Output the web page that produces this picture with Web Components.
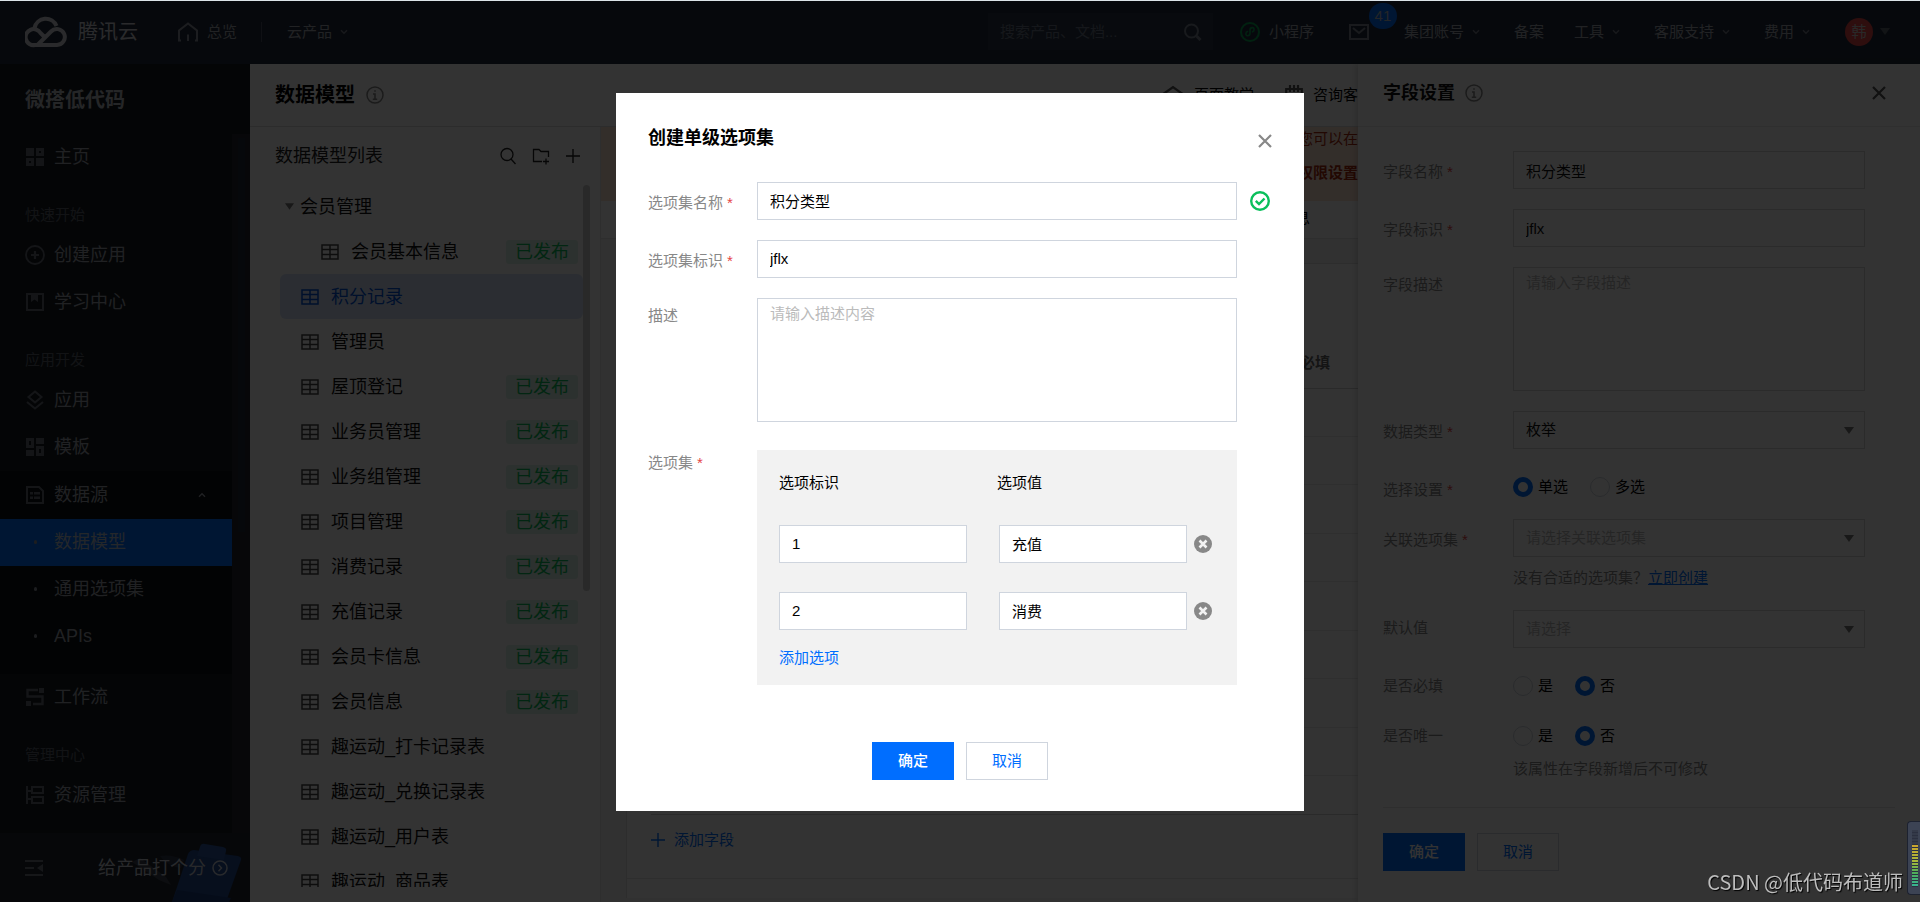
<!DOCTYPE html>
<html lang="zh-CN">
<head>
<meta charset="utf-8">
<title>微搭低代码 - 数据模型</title>
<style>
html,body{margin:0;height:100%}
body{font:15px/20px "Liberation Sans","Noto Sans CJK SC",sans-serif;color:#000;background:#fff;overflow:hidden}
</style>
</head>
<body>
<wd-app></wd-app>
<script>
function define(name, html, setup) {
  const tpl = document.createElement('template');
  tpl.innerHTML = '<style>*{box-sizing:border-box}:host{display:block}button,input,select,textarea{font:inherit;color:inherit;margin:0;border-radius:0}button{background:none;border:0;padding:0}a{text-decoration:none;color:inherit}</style>' + html;
  customElements.define(name, class extends HTMLElement {
    connectedCallback() {
      if (this.shadowRoot) return;
      this.attachShadow({ mode: 'open' }).append(tpl.content.cloneNode(true));
      if (setup) setup.call(this, this.shadowRoot);
    }
  });
}

const ICONS = {
  cloud: ['0 0 42 32', '<g fill="none" stroke="currentColor" stroke-width="4"><path d="M9.500 12a11.500 11.500 0 0 1 22-2"/><path d="M19 20.500l-3.500-3.500A8 8 0 1 0 10 29h22a8 8 0 1 0-6-13.500L13 28.500"/></g>'],
  home: ['0 0 20 20', '<path fill="none" stroke="currentColor" stroke-width="2" d="M3 18.500H1V8.500L10 1.500l9 7v10h-2M10 12.500v6.500"/>'],
  chev: ['0 0 8 6', '<path fill="none" stroke="currentColor" stroke-width="1.400" d="M1 1.200l3 3 3-3"/>'],
  chevup: ['0 0 8 6', '<path fill="none" stroke="currentColor" stroke-width="1.400" d="M1 4.800l3-3 3 3"/>'],
  caret: ['0 0 10 7', '<path fill="currentColor" d="M0 0h10L5 7z"/>'],
  search: ['0 0 16 18', '<g fill="none" stroke="currentColor" stroke-width="1.300"><circle cx="7" cy="7.500" r="6"/><path d="M11 12l4.500 5"/></g>'],
  searchb: ['0 0 18 18', '<g fill="none" stroke="currentColor" stroke-width="2"><circle cx="7.500" cy="8" r="6.500"/><path stroke-width="3" d="M12.500 13l4 4"/></g>'],
  mini: ['0 0 20 20', '<g fill="none" stroke="currentColor"><circle cx="10" cy="10" r="9" stroke-width="2"/><path stroke-width="1.600" stroke-linecap="round" d="M7.500 9.500c-2 .5-2.300 4.200 0 4.200 1.500 0 2.500-1 2.500-2.500V8c0-1.500 1-2.400 2.400-2.400 2.200 0 2.200 3.400.1 4.200"/></g>'],
  mail: ['0 0 20 16', '<path fill="none" stroke="currentColor" stroke-width="2" d="M1 1h18v14H1zM4 4l6 5 6-5"/>'],
  info: ['0 0 18 18', '<circle cx="9" cy="9" r="8" fill="none" stroke="currentColor" stroke-width="1.500"/><path fill="none" stroke="currentColor" stroke-width="1.600" d="M7 8h2v5M6.800 13.200h4.400M8.200 5h1.600"/>'],
  folder: ['0 0 18 18', '<path fill="none" stroke="currentColor" stroke-width="1.300" d="M10 14.500H1.500v-12H7l2 2h7.500V10M11 14.500h6M14 11.500v6"/>'],
  plus: ['0 0 14 14', '<path fill="none" stroke="currentColor" stroke-width="1.400" d="M7 0v14M0 7h14"/>'],
  table: ['0 0 18 18', '<path fill="none" stroke="currentColor" stroke-width="1.500" d="M1 2h16v14H1zM1 6.500h16M1 11.500h16M9 2v14"/>'],
  close: ['0 0 14 14', '<path fill="none" stroke="currentColor" stroke-width="2.200" d="M1 1l12 12M13 1L1 13"/>'],
  check: ['0 0 20 20', '<g fill="none" stroke="currentColor"><circle cx="10" cy="10" r="8.800" stroke-width="2.400"/><path stroke-width="2.400" d="M5.800 9.800l3.200 3.200 5.500-5.500"/></g>'],
  remove: ['0 0 18 18', '<circle cx="9" cy="9" r="9" fill="currentColor"/><path stroke="#f2f2f2" stroke-width="2.600" d="M5.500 5.500l7 7M12.500 5.500l-7 7"/>'],
  school: ['0 0 22 20', '<path fill="none" stroke="currentColor" stroke-width="2.200" d="M2 8.500L11 2l9 6.500L11 15zM5 11v6h12v-6"/>'],
  calendar: ['0 0 18 20', '<path fill="none" stroke="currentColor" stroke-width="2.200" d="M1.200 4h15.600v14H1.200zM5 0v7M9 0v7M13 0v7"/>'],
  grid: ['0 0 18 18', '<path fill="currentColor" fill-rule="evenodd" d="M0 0h8v8H0zM10 0h8v8h-8zM13 3v2h2V3zM0 10h8v8H0zM3 13v2h2v-2zM10 10h8v8h-8z"/>'],
  add: ['0 0 20 20', '<circle cx="10" cy="10" r="9" fill="none" stroke="currentColor" stroke-width="1.800"/><path stroke="currentColor" stroke-width="2.200" d="M10 6v8M6 10h8"/>'],
  book: ['0 0 18 18', '<path fill="none" stroke="currentColor" stroke-width="2" d="M1 1h16v16H1z"/><path fill="currentColor" d="M5 1h7v8L8.500 6.500 5 9z"/>'],
  layers: ['0 0 18 20', '<path fill="none" stroke="currentColor" stroke-width="2" d="M9 1.500L15.500 7 9 12.500 2.500 7zM1 12l8 6.500 8-6.500"/>'],
  tpl: ['0 0 18 18', '<path fill="currentColor" fill-rule="evenodd" d="M0 0h8v10H0zM3 3v4h2V3zM10 0h8v6h-8zM0 12h8v6H0zM10 8h8v10h-8zM13 11v4h2v-4z"/>'],
  data: ['0 0 18 18', '<path fill="none" stroke="currentColor" stroke-width="2" d="M1 1h12l4 4v12H1z"/><path fill="currentColor" d="M4 6h3v2.500H4zM8 6h6v2.500H8zM4 10.500h3V13H4zM8 10.500h6V13H8z"/>'],
  flow: ['0 0 18 18', '<path fill="none" stroke="currentColor" stroke-width="2.400" d="M12 2H1.500v6.500h15V16H7"/><path fill="currentColor" d="M13 0h5v5h-5zM0 13h5v5H0z"/>'],
  res: ['0 0 18 18', '<path fill="none" stroke="currentColor" stroke-width="2" d="M1 0v18M1 5h5M1 13h5M6 1h11v6H6zM6 11h11v6H6z"/>'],
  line: ['0 0 20 18', '<path stroke="currentColor" stroke-width="1.600" d="M0 1h20"/>'],
  fold: ['0 0 18 16', '<path fill="none" stroke="currentColor" stroke-width="2" d="M0 1h18M0 8h9M0 15h18"/><path fill="currentColor" d="M18 4v8l-6-4z"/>'],
  go: ['0 0 16 16', '<g fill="none" stroke="currentColor" stroke-width="1.500"><circle cx="8" cy="8" r="7"/><path d="M6.500 4.800L9.500 8l-3 3.200"/></g>'],
  clipboard: ['0 0 112 60', '<path fill="#5b6170" opacity=".5" d="M0 20l8-4 26 19 5 8-12-5z"/><path fill="#4b5a78" opacity=".4" d="M28 14q12-2 24 4l-3 8q-14-2-21-12z"/><path fill="#234a91" d="M62 8l44 6q4 1 3 4L94 60H40L56 12q2-4 6-4z"/><path fill="#1b3c7c" d="M45 48l54 8-2 4H40z"/><path fill="#2d579f" d="M68 5q1-4 5-3l18 3q4 1 3 4l-2 9-27-4z"/>']
};
customElements.define('wd-icon', class extends HTMLElement {
  connectedCallback() {
    if (this.shadowRoot) return;
    const [box, body] = ICONS[this.getAttribute('name')];
    const [, , w, h] = box.split(' ');
    this.attachShadow({ mode: 'open' }).innerHTML =
      `<style>:host{display:inline-block;flex:none;width:${w}px;height:${h}px}svg{display:block;width:100%;height:100%}</style><svg viewBox="${box}" aria-hidden="true">${body}</svg>`;
  }
});

/* ---------- top bar ---------- */
define('wd-header', `
<style>
:host{background:#222b3c;color:#a4aab4;height:63px;flex:none}
header{display:flex;align-items:center;height:100%;padding:0 30px 2px 25px}
.brand{display:flex;align-items:center;gap:11px;font-size:20px;color:#d0d3d9}
.home{display:flex;align-items:center;gap:9px;margin-left:40px}
.home wd-icon{color:#8d939f}
.sep{width:1px;height:20px;background:#4a5365;margin:0 25px 0 24px}
.drop{display:flex;align-items:center;gap:8px}
.drop wd-icon{color:#757c89;margin-right:4px}
.right{display:flex;align-items:center;margin-left:auto}
.search{display:flex;align-items:center;width:225px;height:37px;padding:0 11px 0 12px;background:#293445;color:#7a8290;margin-right:27px}
.search input{flex:1;min-width:0;background:none;border:0;padding:0;outline:0}
.search input::placeholder{color:#6b7585;opacity:1}
.mini{display:flex;align-items:center;gap:9px;margin-right:35px}
.mini wd-icon{color:#07a553}
.mail{position:relative;display:flex;margin-right:35px;color:#7c8390}
.badge{position:absolute;left:20px;bottom:11px;width:28px;height:26px;border-radius:13px;background:#006eff;color:#b4bac4;text-align:center;line-height:26px}
nav{display:flex;gap:30px;margin-right:31px}
.user{display:flex;align-items:center;gap:7px;color:#5c6370}
.avatar{width:28px;height:28px;border-radius:14px;background:#e54545;color:#ccc;text-align:center;line-height:28px}
</style>
<header>
<a class="brand" href="#"><wd-icon name="cloud"></wd-icon>腾讯云</a>
<a class="home" href="#"><wd-icon name="home"></wd-icon>总览</a><span class="sep"></span>
<a class="drop" href="#">云产品<wd-icon name="chev"></wd-icon></a>
<div class="right">
<label class="search"><input aria-label="搜索" placeholder="搜索产品、文档..."><wd-icon name="searchb"></wd-icon></label>
<a class="mini" href="#"><wd-icon name="mini"></wd-icon>小程序</a>
<a class="mail" href="#" aria-label="消息"><wd-icon name="mail"></wd-icon><span class="badge">41</span></a>
<nav>
<a class="drop" href="#">集团账号<wd-icon name="chev"></wd-icon></a>
<a class="drop" href="#">备案</a>
<a class="drop" href="#">工具<wd-icon name="chev"></wd-icon></a>
<a class="drop" href="#">客服支持<wd-icon name="chev"></wd-icon></a>
<a class="drop" href="#">费用<wd-icon name="chev"></wd-icon></a>
</nav>
<a class="user" href="#"><span class="avatar">韩</span><wd-icon name="caret"></wd-icon></a>
</div>
</header>`);

/* ---------- sidebar ---------- */
define('wd-nav-item', `
<style>
:host{flex:none}
a{display:flex;align-items:center;height:47px;padding:0 0 2px 25px;font-size:18px;color:#a0a5ae}
.ic{display:flex;justify-content:center;width:20px;margin-right:9px;color:#656b76}
:host([sub]) i{width:3px;height:4px;border-radius:2px;background:#8a909b}
:host([active]) a{background:#006eff;color:#b4c0d2}
wd-icon.end{margin-left:auto;margin-right:26px}
</style>
<a href="#"><span class="ic"></span><slot></slot></a>`, function (root) {
  const icon = this.getAttribute('icon');
  root.querySelector('.ic').innerHTML = icon ? `<wd-icon name="${icon}"></wd-icon>` : '<i></i>';
  if (this.hasAttribute('open')) root.querySelector('a').insertAdjacentHTML('beforeend', '<wd-icon class="end" name="chevup"></wd-icon>');
});
define('wd-sidebar', `
<style>
:host{display:flex;flex-direction:column;width:250px;flex:none;background:#161b22;min-height:0}
h1{margin:0;padding:2px 0 0 25px;font-size:20px;line-height:68px;color:#b9bdc4;flex:none}
.scroll{flex:1;display:flex;min-height:0;overflow:hidden}
nav{flex:1;display:flex;flex-direction:column}
h2{margin:0;padding:23px 0 6px 25px;font-size:15px;line-height:22px;font-weight:400;color:#5c626c;flex:none}
.group{background:#0b0f14;padding:1px 0 14px;flex:none}
.track{width:18px;background:#25272d;padding:4px 5px 0 6px}
.track div{height:394px;background:#212a3a}
footer{display:flex;align-items:center;height:69px;flex:none;background:#20252f;padding-left:25px;color:#6d737e;position:relative;overflow:hidden}
footer a{display:flex;align-items:center;gap:6px;margin-left:auto;margin-right:22px;font-size:18px;color:#c9ced8;position:relative}
.art{position:absolute;right:6px;bottom:0}
</style>
<h1>微搭低代码</h1>
<div class="scroll"><nav>
<wd-nav-item icon="grid">主页</wd-nav-item>
<h2>快速开始</h2>
<wd-nav-item icon="add">创建应用</wd-nav-item>
<wd-nav-item icon="book">学习中心</wd-nav-item>
<h2>应用开发</h2>
<wd-nav-item icon="layers">应用</wd-nav-item>
<wd-nav-item icon="tpl">模板</wd-nav-item>
<div class="group">
<wd-nav-item icon="data" open>数据源</wd-nav-item>
<wd-nav-item sub active>数据模型</wd-nav-item>
<wd-nav-item sub>通用选项集</wd-nav-item>
<wd-nav-item sub>APIs</wd-nav-item>
</div>
<wd-nav-item icon="flow">工作流</wd-nav-item>
<h2>管理中心</h2>
<wd-nav-item icon="res">资源管理</wd-nav-item>
<wd-nav-item icon="line"></wd-nav-item>
</nav><div class="track"><div></div></div></div>
<footer><wd-icon name="fold"></wd-icon><wd-icon class="art" name="clipboard"></wd-icon><a href="#">给产品打个分<wd-icon name="go"></wd-icon></a></footer>`);

/* ---------- model list ---------- */
define('wd-model-item', `
<style>
:host{flex:none}
a{display:flex;align-items:center;gap:12px;height:45px;padding:0 5px 0 21px;font-size:18px;border-radius:6px;color:#111}
wd-icon{color:#444}
:host([nested]) a{padding-left:41px}
:host([active]) a{background:#d5e2fa;color:#0052d9}
:host([active]) wd-icon{color:#0052d9}
:host([group]) a{padding-left:5px;gap:6px}
:host([group]) wd-icon{color:#777;width:9px}
.tag{margin-left:auto;width:72px;height:24px;border-radius:3px;background:#dcf3e8;color:#0abf5b;line-height:24px;text-align:center}
</style>
<a href="#"><slot></slot></a>`, function (root) {
  const a = root.querySelector('a');
  a.insertAdjacentHTML('afterbegin', `<wd-icon name="${this.hasAttribute('group') ? 'caret' : 'table'}"></wd-icon>`);
  if (this.hasAttribute('published')) a.insertAdjacentHTML('beforeend', '<span class="tag">已发布</span>');
});
define('wd-model-list', `
<style>
:host{display:flex;flex-direction:column;width:351px;flex:none;border-right:1px solid #e3e3e3;min-height:0;position:relative}
header{display:flex;align-items:center;height:57px;flex:none;padding:0 20px 0 25px}
h2{margin:0 auto 0 0;font-size:18px;font-weight:400;color:#222}
.tools{display:flex;align-items:center;gap:16px;color:#222}
button{display:flex}
.list{flex:1;min-height:0;overflow:hidden;display:flex;flex-direction:column;padding:0 17px 0 30px;margin-bottom:15px}
.bar{position:absolute;right:10px;top:58px;width:7px;height:406px;border-radius:4px;background:#ccc}
</style>
<header><h2>数据模型列表</h2><div class="tools">
<button aria-label="搜索"><wd-icon name="search"></wd-icon></button>
<button aria-label="新建分组"><wd-icon name="folder"></wd-icon></button>
<button aria-label="新建模型"><wd-icon name="plus"></wd-icon></button></div></header>
<div class="list">
<wd-model-item group>会员管理</wd-model-item>
<wd-model-item nested published>会员基本信息</wd-model-item>
<wd-model-item active>积分记录</wd-model-item>
<wd-model-item>管理员</wd-model-item>
<wd-model-item published>屋顶登记</wd-model-item>
<wd-model-item published>业务员管理</wd-model-item>
<wd-model-item published>业务组管理</wd-model-item>
<wd-model-item published>项目管理</wd-model-item>
<wd-model-item published>消费记录</wd-model-item>
<wd-model-item published>充值记录</wd-model-item>
<wd-model-item published>会员卡信息</wd-model-item>
<wd-model-item published>会员信息</wd-model-item>
<wd-model-item>趣运动_打卡记录表</wd-model-item>
<wd-model-item>趣运动_兑换记录表</wd-model-item>
<wd-model-item>趣运动_用户表</wd-model-item>
<wd-model-item>趣运动_商品表</wd-model-item>
</div><div class="bar"></div>`);

/* ---------- model detail ---------- */
define('wd-detail', `
<style>
:host{display:flex;flex-direction:column;flex:1;min-width:0;overflow:hidden;background:#f5f5f5}
.alert{display:flex;flex-direction:column;align-items:flex-end;justify-content:space-between;height:74px;padding:2px 0 18px;background:#ffe3d3;color:#a8290c;flex:none;white-space:nowrap}
.alert strong{font-weight:700}
.tabs{display:flex;justify-content:flex-end;align-items:center;height:38px;padding:0 48px 3px 0;background:#fff;border-bottom:1px solid #e3e3e3;flex:none}
.card{flex:1;margin:24px 0 4px 25px;background:#fff;border:solid #e0e0e0;border-width:1px 0 0 1px;padding-top:74px}
table{width:100%;height:438px;border-collapse:collapse}
th,td{padding:0;border-bottom:1px solid #ececec}
th{height:50px;font-weight:700;text-align:right;color:#666;padding-right:28px;border-color:#d0d0d0}
.more{margin:38px 0 0 24px;border-top:1px solid #d2d2d2;padding:13px 0 26px}
.more button{display:flex;align-items:center;gap:9px;color:#006eff;line-height:24px}
.end{border-top:1px solid #e3e3e3}
</style>
<div class="alert"><span>您可以在</span><strong>权限设置</strong></div>
<div class="tabs"><a href="#">基本信息</a></div>
<div class="card">
<table><thead><tr><th>必填</th></tr></thead><tbody><tr><td></td></tr><tr><td></td></tr><tr><td></td></tr><tr><td></td></tr><tr><td></td></tr><tr><td></td></tr><tr><td></td></tr><tr><td></td></tr></tbody></table>
<div class="more"><button><wd-icon name="plus"></wd-icon>添加字段</button></div><div class="end"></div>
</div>`);
define('wd-workspace', `
<style>
:host{display:flex;flex-direction:column;flex:1;min-width:0;background:#fff;overflow:hidden}
header{display:flex;align-items:center;gap:11px;height:63px;padding-left:25px;border-bottom:1px solid #ddd;flex:none}
h1{margin:0;font-size:20px}
header>wd-icon{color:#888}
.links{display:flex;gap:31px;margin-left:auto;white-space:nowrap}
.links a{display:flex;align-items:center;gap:10px}
.links wd-icon{color:#555}
.body{flex:1;display:flex;min-height:0}
</style>
<header><h1>数据模型</h1><wd-icon name="info"></wd-icon>
<div class="links"><a href="#"><wd-icon name="school"></wd-icon>页面教学</a><a href="#"><wd-icon name="calendar"></wd-icon>咨询客</a></div></header>
<div class="body"><wd-model-list></wd-model-list><wd-detail></wd-detail></div>`);

/* ---------- form parts ---------- */
let uid = 0;
define('wd-field', `
<style>
:host{margin-bottom:20px}
:host([type=radio]){margin-bottom:14px}
.row{display:flex}
.name{width:var(--label-width,130px);flex:none;padding-top:8px;color:#888}
:host([required]) .name{padding-top:11px}
.name b{font-weight:400;color:#e54545;margin-left:4px}
.ctl{width:var(--control-width,352px);flex:none;position:relative}
input[type=text],textarea,select{display:block;width:100%;height:38px;padding:0 12px;border:1px solid var(--line,#cfd5de);background:#fff;outline:0;color:var(--ink,#000)}
textarea{height:124px;padding:5px 12px;resize:none}
select{appearance:none}
select.empty{color:#bbb}
::placeholder{color:#bbb;opacity:1}
.ctl wd-icon{position:absolute;right:11px;top:16px;color:#777;pointer-events:none}
.radios{display:flex;gap:22px;height:36px;align-items:center}
.radios label{display:flex;align-items:center;gap:5px}
input[type=radio]{appearance:none;width:20px;height:20px;border-radius:10px;border:1px solid #cfd5de;background:#fff}
input[type=radio]:checked{border:5px solid #006eff}
</style>
<div class="row"><label class="name"></label><div class="ctl"></div><slot name="suffix"></slot></div><slot></slot>`, function (root) {
  const get = n => this.getAttribute(n) || '';
  const id = 'f' + (++uid), name = root.querySelector('.name'), ctl = root.querySelector('.ctl'), type = get('type');
  name.textContent = get('label');
  if (this.hasAttribute('required')) name.insertAdjacentHTML('beforeend', '<b>*</b>');
  if (type === 'radio') {
    name.id = id;
    ctl.innerHTML = `<div class="radios" role="radiogroup" aria-labelledby="${id}">` + get('options').split(',').map(o =>
      `<label><input type="radio" name="${id}r"${o === get('value') ? ' checked' : ''}>${o}</label>`).join('') + '</div>';
    return;
  }
  name.htmlFor = id;
  if (type === 'select') ctl.innerHTML = `<select id="${id}" class="${get('value') ? '' : 'empty'}"><option>${get('value') || get('placeholder')}</option></select><wd-icon name="caret"></wd-icon>`;
  else if (type === 'area') ctl.innerHTML = `<textarea id="${id}" placeholder="${get('placeholder')}"></textarea>`;
  else ctl.innerHTML = `<input type="text" id="${id}" value="${get('value')}">`;
});
define('wd-button', `
<style>
button{width:82px;height:38px;border:1px solid #cfd5de;background:#fff;color:#006eff}
:host([primary]) button{background:#006eff;border-color:#006eff;color:#fff;font-weight:500}
</style><button><slot></slot></button>`);

/* ---------- field drawer ---------- */
define('wd-drawer', `
<style>
:host{width:562px;flex:none;background:#fff;box-shadow:-2px 0 6px rgba(0,0,0,.15);position:relative;--line:#d8d8d8;--ink:#111}
header{display:flex;align-items:center;gap:10px;height:63px;padding:0 34px 4px 25px;border-bottom:1px solid #e8e8e8}
h2{margin:0;font-size:18px;color:#111}
header>wd-icon{color:#888}
header button{margin-left:auto;color:#555;display:flex}
form{padding:24px 25px 0}
.hint{margin:9px 0 0 130px;line-height:24px;color:#888}
.hint.near{margin-top:3px}
.hint a{color:#006eff;text-decoration:underline}
.last{margin-bottom:0;display:block}
footer{display:flex;gap:12px;border-top:1px solid #e3e3e3;margin:26px 25px 0;padding-top:25px}
</style>
<header><h2>字段设置</h2><wd-icon name="info"></wd-icon><button aria-label="关闭"><wd-icon name="close"></wd-icon></button></header>
<form>
<wd-field label="字段名称" required value="积分类型"></wd-field>
<wd-field label="字段标识" required value="jflx"></wd-field>
<wd-field label="字段描述" type="area" placeholder="请输入字段描述"></wd-field>
<wd-field label="数据类型" required type="select" value="枚举"></wd-field>
<wd-field label="选择设置" required type="radio" options="单选,多选" value="单选"></wd-field>
<wd-field label="关联选项集" required type="select" placeholder="请选择关联选项集"><div class="hint">没有合适的选项集？<a href="#">立即创建</a></div></wd-field>
<wd-field label="默认值" type="select" placeholder="请选择"></wd-field>
<wd-field label="是否必填" type="radio" options="是,否" value="否"></wd-field>
<wd-field class="last" label="是否唯一" type="radio" options="是,否" value="否"><div class="hint near">该属性在字段新增后不可修改</div></wd-field>
</form>
<footer><wd-button primary>确定</wd-button><wd-button>取消</wd-button></footer>`);

/* ---------- option set dialog ---------- */
define('wd-option-row', `
<style>
:host{display:flex;align-items:center;margin-bottom:29px}
input{width:188px;height:38px;padding:0 12px;border:1px solid #cfd5de;background:#fff;outline:0}
input+input{margin:0 7px 0 32px}
button{display:flex;color:#888}
</style>
<input type="text" aria-label="选项标识"><input type="text" aria-label="选项值"><button aria-label="删除"><wd-icon name="remove"></wd-icon></button>`, function (root) {
  const [k, v] = root.querySelectorAll('input');
  k.setAttribute('value', this.getAttribute('key'));
  v.setAttribute('value', this.getAttribute('value'));
});
define('wd-dialog', `
<style>
:host{width:688px;background:#fff;padding:32px 32px 31px;--label-width:109px;--control-width:480px}
header{display:flex;align-items:center;justify-content:space-between;height:26px;margin-bottom:31px}
h2{margin:0;font-size:18px}
header button{display:flex;color:#888;padding-top:6px}
.ok{color:#0abf5b;margin:9px 0 0 13px}
.set{display:flex;padding-top:8px}
.label{width:109px;color:#888;padding-top:3px}
.label b{font-weight:400;color:#e54545;margin-left:4px}
.box{width:480px;background:#f2f2f2;padding:23px 22px 17px}
.cols{display:flex;margin-bottom:32px}
.cols span{width:222px}
.box wd-option-row:last-of-type{margin-bottom:18px}
.box a{color:#006eff}
footer{display:flex;justify-content:center;gap:12px;padding-top:57px}
</style>
<header><h2>创建单级选项集</h2><button aria-label="关闭"><wd-icon name="close"></wd-icon></button></header>
<wd-field label="选项集名称" required value="积分类型"><wd-icon class="ok" slot="suffix" name="check"></wd-icon></wd-field>
<wd-field label="选项集标识" required value="jflx"></wd-field>
<wd-field label="描述" type="area" placeholder="请输入描述内容"></wd-field>
<div class="set"><span class="label">选项集<b>*</b></span><div class="box">
<div class="cols"><span>选项标识</span><span>选项值</span></div>
<wd-option-row key="1" value="充值"></wd-option-row>
<wd-option-row key="2" value="消费"></wd-option-row>
<a href="#">添加选项</a></div></div>
<footer><wd-button primary>确定</wd-button><wd-button>取消</wd-button></footer>`);

/* ---------- page ---------- */
define('wd-app', `
<style>
:host{display:flex;flex-direction:column;height:100vh;border-top:1px solid #dbe3e8;box-sizing:border-box}
.main{flex:1;display:flex;min-height:0}
.mask{position:fixed;inset:1px 0 0;background:rgba(0,0,0,.8);display:flex;align-items:center;justify-content:center}
.mark{position:fixed;right:17px;bottom:8px;font:20px/24px "Noto Sans CJK SC",sans-serif;color:#bdbdbd;text-shadow:1px 1px 1px #000}
.meter{position:fixed;right:0;bottom:7px;width:13px;height:74px;border:1px solid #1d2230;border-right:0;border-radius:4px 0 0 4px;background:#3c4354;padding:8px 2px 7px 4px}
.meter div{height:100%;background:repeating-linear-gradient(transparent 0 2px,#2b3040 2px 3px),linear-gradient(#343a49 0 27%,#c9a52e 27%,#a9b83a 55%,#4fae5a 75%,#35b596)}
</style>
<wd-header></wd-header>
<div class="main"><wd-sidebar></wd-sidebar><wd-workspace></wd-workspace><wd-drawer></wd-drawer></div>
<div class="mask"><wd-dialog role="dialog" aria-label="创建单级选项集"></wd-dialog></div>
<div class="mark">CSDN @低代码布道师</div>
<div class="meter"><div></div></div>`);
</script>
</body>
</html>
